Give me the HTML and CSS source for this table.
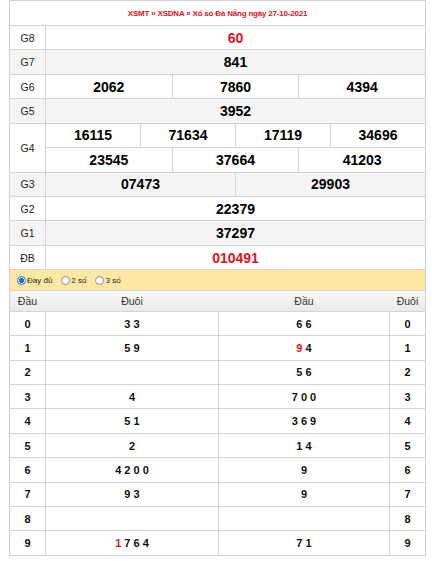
FILE: index.html
```html
<!DOCTYPE html>
<html lang="vi">
<head>
<meta charset="utf-8">
<title>XSDNA</title>
<link rel="stylesheet" href="styles.css">
</head>
<body>
<div class="board">
  <div class="title">XSMT » XSDNA » Xổ số Đà Nẵng ngày 27-10-2021</div>

  <div class="prize"><div class="lbl">G8</div><div class="vals"><div class="line"><span class="cell red">60</span></div></div></div>
  <div class="prize alt"><div class="lbl">G7</div><div class="vals"><div class="line"><span class="cell">841</span></div></div></div>
  <div class="prize"><div class="lbl">G6</div><div class="vals"><div class="line"><span class="cell">2062</span><span class="cell">7860</span><span class="cell">4394</span></div></div></div>
  <div class="prize alt"><div class="lbl">G5</div><div class="vals"><div class="line"><span class="cell">3952</span></div></div></div>
  <div class="prize double"><div class="lbl">G4</div><div class="vals">
    <div class="line"><span class="cell">16115</span><span class="cell">71634</span><span class="cell">17119</span><span class="cell">34696</span></div>
    <div class="line"><span class="cell">23545</span><span class="cell">37664</span><span class="cell">41203</span></div>
  </div></div>
  <div class="prize alt"><div class="lbl">G3</div><div class="vals"><div class="line"><span class="cell">07473</span><span class="cell">29903</span></div></div></div>
  <div class="prize"><div class="lbl">G2</div><div class="vals"><div class="line"><span class="cell">22379</span></div></div></div>
  <div class="prize alt"><div class="lbl">G1</div><div class="vals"><div class="line"><span class="cell">37297</span></div></div></div>
  <div class="prize"><div class="lbl">ĐB</div><div class="vals"><div class="line"><span class="cell red">010491</span></div></div></div>

  <div class="options">
    <label class="opt"><span class="radio on"></span>Đầy đủ</label>
    <label class="opt"><span class="radio"></span>2 số</label>
    <label class="opt"><span class="radio"></span>3 số</label>
  </div>

  <div class="loto head">
    <span class="c1">Đầu</span><span class="c2">Đuôi</span><span class="c3">Đầu</span><span class="c4">Đuôi</span>
  </div>
  <div class="loto"><span class="c1">0</span><span class="c2">3 3</span><span class="c3">6 6</span><span class="c4">0</span></div>
  <div class="loto"><span class="c1">1</span><span class="c2">5 9</span><span class="c3"><i class="hl">9</i> 4</span><span class="c4">1</span></div>
  <div class="loto"><span class="c1">2</span><span class="c2"></span><span class="c3">5 6</span><span class="c4">2</span></div>
  <div class="loto"><span class="c1">3</span><span class="c2">4</span><span class="c3">7 0 0</span><span class="c4">3</span></div>
  <div class="loto"><span class="c1">4</span><span class="c2">5 1</span><span class="c3">3 6 9</span><span class="c4">4</span></div>
  <div class="loto"><span class="c1">5</span><span class="c2">2</span><span class="c3">1 4</span><span class="c4">5</span></div>
  <div class="loto"><span class="c1">6</span><span class="c2">4 2 0 0</span><span class="c3">9</span><span class="c4">6</span></div>
  <div class="loto"><span class="c1">7</span><span class="c2">9 3</span><span class="c3">9</span><span class="c4">7</span></div>
  <div class="loto"><span class="c1">8</span><span class="c2"></span><span class="c3"></span><span class="c4">8</span></div>
  <div class="loto"><span class="c1">9</span><span class="c2"><i class="hl">1</i> 7 6 4</span><span class="c3">7 1</span><span class="c4">9</span></div>
</div>
</body>
</html>
```

FILE: styles.css
```css
* { box-sizing: border-box; }

html, body {
  margin: 0;
  padding: 0;
  background: #fff;
  font-family: "Liberation Sans", Arial, sans-serif;
  color: #111;
}

.board {
  margin-left: 9px;
  width: 417px;
  border-left: 1px solid #cfcfcf;
  border-right: 1px solid #cfcfcf;
  border-bottom: 1px solid #cfcfcf;
}

.title {
  height: 25px;
  border-top: 1px solid #cfcfcf;
  display: flex;
  align-items: center;
  justify-content: center;
  color: #e3121b;
  font-weight: bold;
  font-size: 8px;
  letter-spacing: -0.2px;
  padding-top: 1px;
}

.prize {
  display: flex;
  height: 24.43px;
  border-top: 1px solid #d4d4d4;
  background: #fff;
}

.prize.alt { background: #f4f4f4; }
.prize.double { height: 48.86px; }

.lbl {
  width: 36px;
  flex: none;
  border-right: 1px solid #d4d4d4;
  display: flex;
  align-items: center;
  justify-content: center;
  font-size: 10.5px;
  color: #222;
}

.vals {
  flex: 1;
  display: flex;
  flex-direction: column;
}

.line {
  flex: 1;
  display: flex;
}

.line + .line { border-top: 1px solid #d4d4d4; }

.cell {
  flex: 1 1 0;
  display: flex;
  align-items: center;
  justify-content: center;
  font-weight: bold;
  font-size: 14px;
  color: #000;
}

.cell + .cell { border-left: 1px solid #d4d4d4; }

.red { color: #e3121b; }

.options {
  height: 20.7px;
  border-top: 1px solid #d4d4d4;
  background: #fde8a3;
  display: flex;
  align-items: center;
  padding-left: 7px;
  gap: 9px;
  font-size: 8px;
  color: #222;
}

.opt {
  display: flex;
  align-items: center;
  gap: 1px;
}

.radio {
  width: 9px;
  height: 9px;
  border-radius: 50%;
  border: 1px solid #8a8a8a;
  background: #fff;
}

.radio.on {
  border-color: #1a6fd6;
  background: radial-gradient(circle, #1a6fd6 0 2.3px, #fff 2.8px);
}

.loto {
  display: flex;
  height: 24.4px;
  border-top: 1px solid #d4d4d4;
  font-weight: bold;
  font-size: 11px;
  color: #111;
}

.loto > span {
  display: flex;
  align-items: center;
  justify-content: center;
  white-space: pre;
}

.loto .c1 { width: 36px; border-right: 1px solid #d4d4d4; }
.loto .c2 { width: 173px; border-right: 1px solid #d4d4d4; }
.loto .c3 { width: 171px; border-right: 1px solid #d4d4d4; }
.loto .c4 { width: 35px; }

.loto.head {
  height: 21px;
  background: linear-gradient(#f8f8f8, #e9e9e9);
  font-weight: normal;
  font-size: 10.5px;
  color: #333;
}

.loto.head > span { border-right-color: transparent; }

.hl {
  font-style: normal;
  color: #e3121b;
}
```
